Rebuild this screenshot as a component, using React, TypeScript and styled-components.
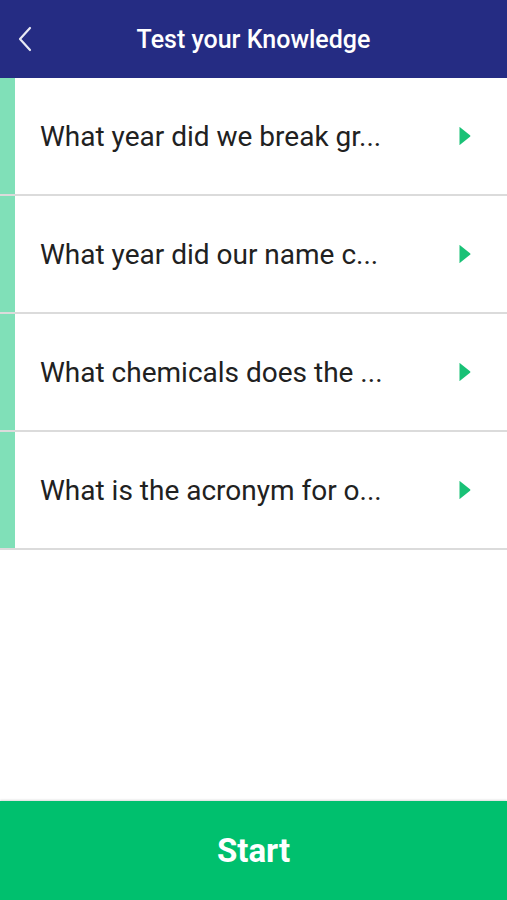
import React from "react";
import styled, { createGlobalStyle } from "styled-components";

const Global = createGlobalStyle`
  html, body { margin: 0; padding: 0; background: #ffffff; }
  body { font-family: Roboto, "Noto Sans", "Liberation Sans", sans-serif; }
  * { box-sizing: border-box; }
`;

const Screen = styled.div`
  width: 507px;
  height: 900px;
  display: flex;
  flex-direction: column;
  background: #ffffff;
  overflow: hidden;
`;

const Header = styled.header`
  height: 78px;
  flex: none;
  background: #252c83;
  display: grid;
  grid-template-columns: 60px 1fr 60px;
  align-items: center;
`;

const BackButton = styled.button`
  border: none;
  background: transparent;
  padding: 0 0 0 17px;
  height: 100%;
  display: flex;
  align-items: center;
  cursor: pointer;
`;

const Title = styled.h1`
  margin: 0;
  text-align: center;
  color: #ffffff;
  font-size: 25px;
  font-weight: 500;
  letter-spacing: 0;
`;

const List = styled.ul`
  list-style: none;
  margin: 0;
  padding: 0;
  display: flex;
  flex-direction: column;
`;

const Row = styled.li`
  height: 118px;
  display: flex;
  border-bottom: 2px solid rgba(0, 0, 0, 0.14);
`;

const Accent = styled.div`
  width: 15px;
  flex: none;
  background: #80e0b8;
`;

const RowBody = styled.div`
  flex: 1;
  display: flex;
  align-items: center;
  justify-content: space-between;
  padding: 0 36px 0 25px;
`;

const Question = styled.span`
  font-size: 28px;
  color: #212121;
  white-space: nowrap;
  letter-spacing: 0;
`;

const Spacer = styled.div`
  flex: 1;
`;

const StartButton = styled.button`
  height: 99px;
  flex: none;
  width: 100%;
  border: none;
  background: #00c06e;
  color: #ffffff;
  font-family: Roboto, "Noto Sans", "Liberation Sans", sans-serif;
  font-size: 33px;
  font-weight: 700;
  box-shadow: 0 -1px 2px rgba(0, 0, 0, 0.15);
  cursor: pointer;
`;

const Chevron = () => (
  <svg width="16" height="26" viewBox="0 0 16 26">
    <path d="M13 2 L3 13 L13 24" fill="none" stroke="#e8e9f4" strokeWidth="2.2" strokeLinecap="round" strokeLinejoin="round" />
  </svg>
);

const Arrow = () => (
  <svg width="13" height="20" viewBox="0 0 13 20">
    <path d="M1.5 1.5 Q1 0.5 2 1.2 L12 9.2 Q13 10 12 10.8 L2 18.8 Q1 19.5 1.5 18.5 Z" fill="#19c176" />
  </svg>
);

const questions = [
  "What year did we break gr...",
  "What year did our name c...",
  "What chemicals does the ...",
  "What is the acronym for o...",
];

export default function App() {
  return (
    <>
      <Global />
      <Screen>
        <Header>
          <BackButton aria-label="Back">
            <Chevron />
          </BackButton>
          <Title>Test your Knowledge</Title>
          <div />
        </Header>
        <List>
          {questions.map((q) => (
            <Row key={q}>
              <Accent />
              <RowBody>
                <Question>{q}</Question>
                <Arrow />
              </RowBody>
            </Row>
          ))}
        </List>
        <Spacer />
        <StartButton>Start</StartButton>
      </Screen>
    </>
  );
}
